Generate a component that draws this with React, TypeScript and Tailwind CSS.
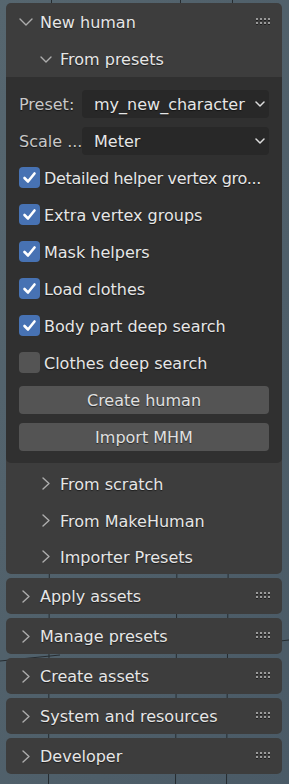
import React from "react";

const shadow = "[text-shadow:0_1px_1px_rgba(0,0,0,0.55)]";
const txt = "leading-[20px] pt-[2px]";

function ChevDown({ w = 14 }: { w?: number }) {
  const h = Math.round(w / 2) + 1;
  return (
    <svg width={w} height={h} viewBox={`0 0 ${w} ${h}`} fill="none">
      <path d={`M1 1 L${w / 2} ${h - 1} L${w - 1} 1`} stroke="#adadad" strokeWidth="1.4" strokeLinecap="round" strokeLinejoin="round" />
    </svg>
  );
}

function ChevRight() {
  return (
    <svg width="8" height="13" viewBox="0 0 8 13" fill="none">
      <path d="M1 1 L7 6.5 L1 12" stroke="#adadad" strokeWidth="1.4" strokeLinecap="round" strokeLinejoin="round" />
    </svg>
  );
}

function Handle() {
  const dots = [];
  for (let r = 0; r < 2; r++)
    for (let c = 0; c < 4; c++)
      dots.push(
        <g key={`${r}-${c}`}>
          <rect x={c * 4} y={r * 4 + 1} width="2" height="2" fill="#1e1e1e" />
          <rect x={c * 4} y={r * 4} width="2" height="2" fill="#9a9a9a" />
        </g>
      );
  return (
    <svg width="14" height="8" viewBox="0 0 14 8">
      {dots}
    </svg>
  );
}

function PanelHeader({ title, open, h }: { title: string; open?: boolean; h: string }) {
  return (
    <div className={`flex items-center ${h} pl-[12px] pr-[12px]`}>
      <div className="w-[15px] flex justify-center shrink-0">{open ? <ChevDown w={14} /> : <ChevRight />}</div>
      <span className={`ml-[7px] text-[#e6e6e6] ${shadow} ${txt} flex-1 whitespace-nowrap`}>{title}</span>
      <Handle />
    </div>
  );
}

function SubHeader({ title, open, h }: { title: string; open?: boolean; h: string }) {
  return (
    <div className={`flex items-center ${h} pl-[32px]`}>
      <div className="w-[16px] flex justify-center shrink-0">{open ? <ChevDown w={12} /> : <ChevRight />}</div>
      <span className={`ml-[6px] text-[#e6e6e6] ${shadow} ${txt} whitespace-nowrap`}>{title}</span>
    </div>
  );
}

function Dropdown({ label, value }: { label: string; value: string }) {
  return (
    <div className="flex items-center h-[37px]">
      <span className={`w-[63px] shrink-0 text-[#c8c8c8] ${shadow} ${txt} whitespace-nowrap`}>{label}</span>
      <div className="flex-1 h-[28px] rounded-[4px] bg-[#282828] flex items-center pl-[12px] pr-[4px]">
        <span className={`flex-1 text-[#e6e6e6] ${shadow} ${txt} whitespace-nowrap`}>{value}</span>
        <svg width="10" height="6" viewBox="0 0 10 6" fill="none">
          <path d="M1 1 L5 5 L9 1" stroke="#dcdcdc" strokeWidth="1.5" strokeLinecap="round" strokeLinejoin="round" />
        </svg>
      </div>
    </div>
  );
}

function Check({ label, checked, tight }: { label: string; checked: boolean; tight?: boolean }) {
  return (
    <div className="flex items-center h-[37px]">
      <div className={`w-[21px] h-[21px] rounded-[4px] shrink-0 flex items-center justify-center ${checked ? "bg-[#4772b3]" : "bg-[#545454]"}`}>
        {checked && (
          <svg width="21" height="21" viewBox="0 0 21 21" fill="none">
            <path d="M5.5 11 L9 14.5 L15.5 6.5" stroke="#ffffff" strokeWidth="2.6" strokeLinecap="round" strokeLinejoin="round" />
          </svg>
        )}
      </div>
      <span className={`ml-[4px] text-[#e6e6e6] ${shadow} ${txt} whitespace-nowrap ${tight ? "tracking-[-0.3px]" : ""}`}>{label}</span>
    </div>
  );
}

function Button({ label }: { label: string }) {
  return (
    <div className={`h-[28px] rounded-[4px] bg-[#545454] flex items-center justify-center text-[#e0e0e0] ${shadow}`}>
      <span className={txt}>{label}</span>
    </div>
  );
}

export default function App() {
  return (
    <div className="relative w-full min-h-[784px] bg-[#4e5e69] font-['DejaVu_Sans','Liberation_Sans',sans-serif] text-[16px] leading-none overflow-hidden">
      <svg className="absolute inset-0" width="289" height="784" viewBox="0 0 289 784">
        <defs>
          <linearGradient id="bg" x1="0" y1="0" x2="1" y2="1">
            <stop offset="0" stopColor="#56666f" />
            <stop offset="1" stopColor="#4a5a66" />
          </linearGradient>
        </defs>
        <rect width="289" height="784" fill="url(#bg)" />
        <g stroke="#262c30" strokeWidth="1">
          <line x1="51.5" y1="0" x2="48.5" y2="784" />
          <line x1="180.5" y1="0" x2="175.5" y2="784" />
          <line x1="232.5" y1="0" x2="226.5" y2="784" />
          <line x1="0" y1="661" x2="60" y2="655" />
          <line x1="280" y1="641" x2="289" y2="640" />
        </g>
      </svg>
      <div className="relative flex flex-col gap-[4px] pt-[3px] pl-[6px] pr-[7px]">
        <div className="rounded-[5px] bg-[#3d3d3d] overflow-hidden">
          <PanelHeader title="New human" open h="h-[38px]" />
          <SubHeader title="From presets" open h="h-[36px]" />
          <div className="bg-[#303030] rounded-b-[5px] px-[13px] pt-[8px] pb-[12px]">
            <Dropdown label="Preset:" value="my_new_character" />
            <Dropdown label="Scale ..." value="Meter" />
            <Check label="Detailed helper vertex gro..." checked tight />
            <Check label="Extra vertex groups" checked />
            <Check label="Mask helpers" checked />
            <Check label="Load clothes" checked />
            <Check label="Body part deep search" checked />
            <Check label="Clothes deep search" checked={false} />
            <div className="mt-[5px] flex flex-col gap-[9px]">
              <Button label="Create human" />
              <Button label="Import MHM" />
            </div>
          </div>
          <div className="pt-[2px]">
            <SubHeader title="From scratch" h="h-[37px]" />
            <SubHeader title="From MakeHuman" h="h-[37px]" />
            <SubHeader title="Importer Presets" h="h-[35px]" />
          </div>
        </div>
        {["Apply assets", "Manage presets", "Create assets", "System and resources", "Developer"].map((t) => (
          <div key={t} className="rounded-[5px] bg-[#3d3d3d]">
            <PanelHeader title={t} h="h-[36px]" />
          </div>
        ))}
      </div>
    </div>
  );
}
